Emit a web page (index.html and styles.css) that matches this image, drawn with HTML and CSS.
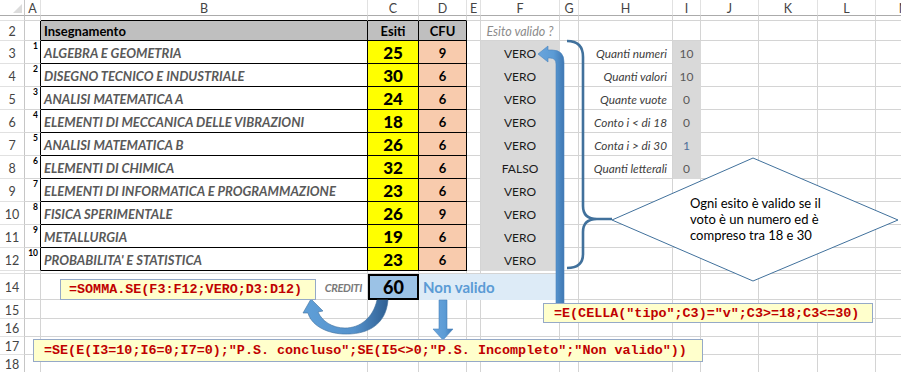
FILE: index.html
```html
<!DOCTYPE html>
<html lang="it">
<head>
<meta charset="utf-8">
<title>Piano di studi</title>
<link rel="stylesheet" href="styles.css">
</head>
<body>
<div class="sheet">
  <!-- column headers -->
  <div class="corner"><span class="tri"></span></div>
  <div class="ch">A</div><div class="ch">B</div><div class="ch">C</div><div class="ch">D</div><div class="ch">E</div><div class="ch">F</div><div class="ch">G</div><div class="ch">H</div><div class="ch">I</div><div class="ch">J</div><div class="ch">K</div><div class="ch">L</div><div class="ch">M</div>
  <!-- row 1 (small) -->
  <div class="rh"></div><div class="ta0"></div><div class="tt"></div><div class="tt"></div><div class="tt"></div><div></div><div></div><div></div><div></div><div></div><div></div><div></div><div></div><div></div>
  <!-- row 2 -->
  <div class="rh">2</div><div class="ta"></div><div class="tb hdr left">Insegnamento</div><div class="tb hdr">Esiti</div><div class="tb hdr">CFU</div><div></div><div class="q">Esito valido ?</div><div></div><div></div><div></div><div></div><div></div><div></div><div></div>
  <!-- row 3 -->
  <div class="rh">3</div><div class="ta"><sup>1</sup></div><div class="tb name">ALGEBRA E GEOMETRIA</div><div class="tb vote">25</div><div class="tb cfu">9</div><div></div><div class="fv">VERO</div><div></div><div class="lab">Quanti numeri</div><div class="iv">10</div><div></div><div></div><div></div><div></div>
  <!-- row 4 -->
  <div class="rh">4</div><div class="ta"><sup>2</sup></div><div class="tb name">DISEGNO TECNICO E INDUSTRIALE</div><div class="tb vote">30</div><div class="tb cfu">6</div><div></div><div class="fv">VERO</div><div></div><div class="lab">Quanti valori</div><div class="iv">10</div><div></div><div></div><div></div><div></div>
  <!-- row 5 -->
  <div class="rh">5</div><div class="ta"><sup>3</sup></div><div class="tb name">ANALISI MATEMATICA A</div><div class="tb vote">24</div><div class="tb cfu">6</div><div></div><div class="fv">VERO</div><div></div><div class="lab">Quante vuote</div><div class="iv">0</div><div></div><div></div><div></div><div></div>
  <!-- row 6 -->
  <div class="rh">6</div><div class="ta"><sup>4</sup></div><div class="tb name">ELEMENTI DI MECCANICA DELLE VIBRAZIONI</div><div class="tb vote">18</div><div class="tb cfu">6</div><div></div><div class="fv">VERO</div><div></div><div class="lab">Conto i &lt; di 18</div><div class="iv">0</div><div></div><div></div><div></div><div></div>
  <!-- row 7 -->
  <div class="rh">7</div><div class="ta"><sup>5</sup></div><div class="tb name">ANALISI MATEMATICA B</div><div class="tb vote">26</div><div class="tb cfu">6</div><div></div><div class="fv">VERO</div><div></div><div class="lab">Conta i &gt; di 30</div><div class="iv blue">1</div><div></div><div></div><div></div><div></div>
  <!-- row 8 -->
  <div class="rh">8</div><div class="ta"><sup>6</sup></div><div class="tb name">ELEMENTI DI CHIMICA</div><div class="tb vote">32</div><div class="tb cfu">6</div><div></div><div class="fv">FALSO</div><div></div><div class="lab">Quanti letterali</div><div class="iv">0</div><div></div><div></div><div></div><div></div>
  <!-- row 9 -->
  <div class="rh">9</div><div class="ta"><sup>7</sup></div><div class="tb name">ELEMENTI DI INFORMATICA E PROGRAMMAZIONE</div><div class="tb vote">23</div><div class="tb cfu">6</div><div></div><div class="fv">VERO</div><div></div><div></div><div></div><div></div><div></div><div></div><div></div>
  <!-- row 10 -->
  <div class="rh">10</div><div class="ta"><sup>8</sup></div><div class="tb name">FISICA SPERIMENTALE</div><div class="tb vote">26</div><div class="tb cfu">9</div><div></div><div class="fv">VERO</div><div></div><div></div><div></div><div></div><div></div><div></div><div></div>
  <!-- row 11 -->
  <div class="rh">11</div><div class="ta"><sup>9</sup></div><div class="tb name">METALLURGIA</div><div class="tb vote">19</div><div class="tb cfu">6</div><div></div><div class="fv">VERO</div><div></div><div></div><div></div><div></div><div></div><div></div><div></div>
  <!-- row 12 -->
  <div class="rh">12</div><div class="ta"><sup>10</sup></div><div class="tb name">PROBABILITA' E STATISTICA</div><div class="tb vote">23</div><div class="tb cfu">6</div><div></div><div class="fv">VERO</div><div></div><div></div><div></div><div></div><div></div><div></div><div></div>
  <!-- row 13 (hidden) -->
  <div class="rh"></div><div></div><div></div><div></div><div></div><div></div><div></div><div></div><div></div><div></div><div></div><div></div><div></div><div></div>
  <!-- row 14 -->
  <div class="rh">14</div><div></div><div class="cred">CREDITI</div><div class="tot">60</div><div class="nv">Non valido</div><div></div><div></div><div></div><div></div><div></div><div></div><div></div>
  <!-- row 15 -->
  <div class="rh">15</div><div></div><div></div><div></div><div></div><div></div><div></div><div></div><div></div><div></div><div></div><div></div><div></div><div></div>
  <!-- row 16 -->
  <div class="rh">16</div><div></div><div></div><div></div><div></div><div></div><div></div><div></div><div></div><div></div><div></div><div></div><div></div><div></div>
  <!-- row 17 -->
  <div class="rh">17</div><div></div><div></div><div></div><div></div><div></div><div></div><div></div><div></div><div></div><div></div><div></div><div></div><div></div>
  <!-- row 18 -->
  <div class="rh">18</div><div></div><div></div><div></div><div></div><div></div><div></div><div></div><div></div><div></div><div></div><div></div><div></div><div></div>
</div>

<svg class="shapes" width="901" height="372" viewBox="0 0 901 372" xmlns="http://www.w3.org/2000/svg">
  <defs>
    <linearGradient id="gv" x1="0" y1="0" x2="1" y2="0">
      <stop offset="0" stop-color="#6aa5dc"/>
      <stop offset="0.6" stop-color="#5b9bd5"/>
      <stop offset="1" stop-color="#3f78b3"/>
    </linearGradient>
    <linearGradient id="gc" x1="0" y1="0" x2="1" y2="0">
      <stop offset="0" stop-color="#5f9fd8"/>
      <stop offset="0.6" stop-color="#5592cc"/>
      <stop offset="1" stop-color="#2f5f92"/>
    </linearGradient>
  </defs>
  <!-- brace -->
  <path d="M567,41 Q583,41 583,57 L583,206 Q583,219 597,219 L612,219 M597,219 Q583,219 583,232 L583,254 Q583,268 567,268" fill="none" stroke="#41719c" stroke-width="2.6"/>
  <!-- diamond -->
  <polygon points="612,220 753,158 898,220 753,281" fill="#ffffff" stroke="#41719c" stroke-width="1"/>
  <!-- bent arrow up then left -->
  <path d="M556,303 L556,64 Q556,58 550,58 L548,58 L548,62 L538,54 L548,46 L548,50 L552,50 Q564,50 564,62 L564,303 Z" fill="url(#gv)" stroke="#4a84bd" stroke-width="0.6"/>
  <!-- curved arrow from total to formula -->
  <path d="M388,300 C386,326 366,335 343,334 C324,333 311,324 308,313 L303,313 L311,299 L323,311 L318,312 C322,321 332,328 345,328 C360,328 373,318 377,300 Z" fill="url(#gc)" stroke="#41719c" stroke-width="0.6"/>
  <!-- down arrow -->
  <path d="M439,300 L447,300 L447,329 L453,329 L443,340 L433,329 L439,329 Z" fill="url(#gv)" stroke="#4a84bd" stroke-width="0.6"/>
</svg>

<div class="dtext">Ogni esito è valido se il<br>voto è un numero ed è<br>compreso tra 18 e 30</div>

<div class="formula f-somma">=SOMMA.SE(F3:F12;VERO;D3:D12)</div>
<div class="formula f-cella">=E(CELLA("tipo";C3)="v";C3&gt;=18;C3&lt;=30)</div>
<div class="formula f-se">=SE(E(I3=10;I6=0;I7=0);"P.S. concluso";SE(I5&lt;&gt;0;"P.S. Incompleto";"Non valido"))</div>
</body>
</html>
```
FILE: styles.css
```css
* { box-sizing: border-box; margin: 0; padding: 0; }
html, body { width: 901px; height: 372px; overflow: hidden; background: #fff; }
body { position: relative; font-family: Lato, "Open Sans", "DejaVu Sans", sans-serif; color: #000; }

.sheet {
  display: grid;
  grid-template-columns: 25px 16px 327px 51px 48px 14px 79px 19px 94px 28px 58px 59px 58px 58px;
  grid-template-rows: 16px 5px 20px repeat(10, 23px) 3px 26px 19px 18px 18px 18px;
  width: 959px;
}
.sheet > div {
  border-right: 1px solid #d4d4d4;
  border-bottom: 1px solid #d4d4d4;
  overflow: hidden;
  white-space: nowrap;
  display: flex;
  align-items: center;
  font-size: 12px;
}

/* headers */
.sheet > .corner { border-right: 1px solid #c6c6c6; border-bottom: 1px solid #ababab; justify-content: flex-end; align-items: flex-end; padding: 0 2px 2px 0; }
.tri { width: 0; height: 0; border-left: 9px solid transparent; border-bottom: 9px solid #dcdcdc; }
.sheet > .ch { justify-content: center; color: #444; font-size: 12.5px; border-right: 1px solid #e1e1e1; border-bottom: 1px solid #ababab; padding-top: 1px; }
.sheet > .rh { justify-content: center; color: #444; font-size: 12.5px; border-right: 1px solid #c6c6c6; border-bottom: 1px solid #e1e1e1; padding-top: 2px; }

/* table borders */
.sheet > .tt { border-bottom: 1px solid #000; }
.sheet > .ta { border-right: 1px solid #000; justify-content: flex-end; align-items: flex-start; padding: 1px 2px 0 0; }
.ta sup { font-size: 8.5px; font-weight: 700; line-height: 1; vertical-align: top; }
.sheet > .tb { border-right: 1px solid #000; border-bottom: 1px solid #000; }
.sheet > .hdr { background: #bfbfbf; font-weight: 700; font-size: 13px; justify-content: center; }
.sheet > .hdr.left { justify-content: flex-start; padding-left: 3px; }
.sheet > .name { font-weight: 700; font-style: italic; color: #595959; font-size: 13px; padding: 2px 0 0 3px; }
.sheet > .vote { background: #ffff00; font-weight: 900; font-size: 17px; justify-content: center; }
.sheet > .cfu { background: #f8cbad; font-weight: 700; font-size: 13px; justify-content: center; padding-top: 2px; }

/* F column */
.sheet > .q { font-style: italic; color: #8c8c8c; font-size: 12.5px; justify-content: center; padding-top: 2px; }
.sheet > .fv { background: #d9d9d9; border-right-color: #d9d9d9; border-bottom-color: #d9d9d9; justify-content: center; font-size: 12px; color: #1a1a1a; padding-top: 3px; }

/* H / I columns */
.sheet > .lab { font-style: italic; color: #404040; font-size: 11.8px; justify-content: flex-end; padding: 2px 5px 0 0; }
.sheet > .iv { background: #d9d9d9; border-right-color: #d9d9d9; border-bottom-color: #d9d9d9; color: #595959; font-size: 12px; justify-content: center; padding-top: 2px; }
.sheet > .iv.blue { color: #4f6f9a; }

/* row 14 */
.sheet > .cred { justify-content: flex-end; font-style: italic; font-weight: 700; color: #7a7a7a; font-size: 11px; padding: 2px 5px 0 0; letter-spacing: -0.3px; }
.sheet > .tot { background: #9bc2e6; border: 2px solid #000; font-weight: 900; font-size: 18px; justify-content: center; }
.sheet > .nv { grid-column: span 3; background: #ddebf7; border-right-color: #ddebf7; border-bottom-color: #ddebf7; color: #5b9bd5; font-weight: 700; font-size: 15px; padding-left: 4px; }

/* overlays */
.shapes { position: absolute; left: 0; top: 0; }
.dtext { position: absolute; left: 690px; top: 195px; font-size: 13px; line-height: 16px; color: #000; }
.formula {
  position: absolute;
  background: #ffffcc;
  border: 1px solid #95a9c7;
  font-family: "Liberation Mono", "Courier New", monospace;
  font-weight: 700;
  font-size: 13.4px;
  color: #c00000;
  white-space: nowrap;
  display: flex;
  align-items: center;
}
.f-somma { left: 60px; top: 279px; width: 256px; height: 21px; padding-left: 8px; }
.f-cella { left: 543px; top: 303px; width: 330px; height: 20px; padding-left: 10px; }
.f-se { left: 33px; top: 339px; width: 670px; height: 23px; padding-left: 10px; }
```
